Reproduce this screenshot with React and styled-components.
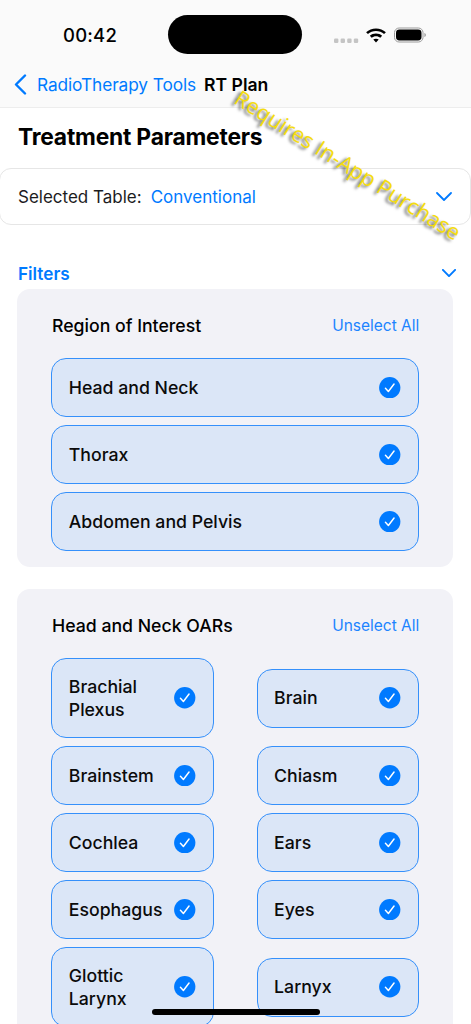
import React from "react";
import styled, { createGlobalStyle } from "styled-components";

const Global = createGlobalStyle`
  html, body { margin: 0; padding: 0; background: #fff; }
  body { font-family: Inter, "Liberation Sans", sans-serif; -webkit-font-smoothing: antialiased; }
`;

const Screen = styled.div`
  position: relative;
  width: 471px;
  height: 1024px;
  overflow: hidden;
  background: #fff;
  color: #000;
`;

const TopBar = styled.header`
  height: 107px;
  background: #fafafa;
  border-bottom: 1px solid #ededed;
`;

const StatusRow = styled.div`
  height: 69px;
  display: flex;
  align-items: center;
  padding-left: 63px;
  box-sizing: border-box;
`;

const Clock = styled.span`
  width: 105px;
  font-size: 18.5px;
  font-weight: 500;
  letter-spacing: 0.2px;
`;

const Island = styled.div`
  width: 134px;
  height: 39px;
  border-radius: 20px;
  background: #000;
`;

const StatusIcons = styled.div`
  display: flex;
  align-items: center;
  margin-left: 31px;
`;

const NavRow = styled.nav`
  display: flex;
  align-items: center;
  height: 30px;
  padding-left: 14px;
`;

const BackLabel = styled.span`
  margin-left: 10px;
  color: #007aff;
  font-size: 17.3px;
  letter-spacing: -0.1px;
`;

const NavTitle = styled.span`
  margin-left: 8px;
  font-size: 17.6px;
  font-weight: 600;
`;

const Title = styled.h1`
  margin: 14px 0 0 18px;
  font-size: 22.8px;
  line-height: 30px;
  font-weight: 700;
  letter-spacing: -0.2px;
`;

const TableCard = styled.div`
  box-sizing: border-box;
  display: flex;
  align-items: center;
  width: 472px;
  height: 57px;
  margin: 16px 0 0 -1px;
  padding: 0 18px 0 18px;
  background: #fff;
  border: 1px solid #e6e6e6;
  border-radius: 12px;
  font-size: 17px;
`;

const TableLabel = styled.span`
  color: #1c1c1e;
`;

const TableValue = styled.span`
  flex: 1;
  margin-left: 9px;
  color: #007aff;
`;

const FilterHead = styled.div`
  display: flex;
  align-items: center;
  justify-content: space-between;
  height: 24px;
  margin-top: 36px;
  padding: 0 15px 0 18px;
  color: #007aff;
  font-size: 17.2px;
  font-weight: 600;
`;

const Panel = styled.section`
  box-sizing: border-box;
  margin: ${(p) => p.$top}px 18px 0 17px;
  padding: 22px 33.7px 16px 34.3px;
  border-radius: 13px;
  background: #f2f2f7;
`;

const PanelHead = styled.div`
  display: flex;
  align-items: center;
  justify-content: space-between;
  height: 28px;
  margin-bottom: 19px;
  padding-left: 0.7px;
`;

const PanelTitle = styled.h2`
  margin: 0;
  font-size: 17.7px;
  font-weight: 500;
`;

const Unselect = styled.span`
  color: #1c84ff;
  font-size: 15.5px;
`;

const List = styled.div`
  display: flex;
  flex-direction: column;
  gap: 8px;
`;

const Grid = styled.div`
  display: grid;
  grid-template-columns: 1fr 1fr;
  column-gap: 42.6px;
  row-gap: 8px;
  align-items: center;
`;

const Option = styled.div`
  box-sizing: border-box;
  display: flex;
  align-items: center;
  justify-content: space-between;
  min-height: 59px;
  padding: 15.5px 17.5px 15.5px 16.5px;
  background: #dbe6f7;
  border: 1.5px solid #3590fb;
  border-radius: 15px;
  font-size: 17.7px;
  font-weight: 500;
  line-height: 23.5px;
`;

const OptionLabel = styled.span`
  color: #0b0b0b;
  max-width: 90px;
`;

const WideLabel = styled(OptionLabel)`
  max-width: none;
`;

const Watermark = styled.div`
  position: absolute;
  left: 201.5px;
  top: 152px;
  width: 292px;
  color: #f5dc0f;
  font-family: "Open Sans", sans-serif;
  font-size: 21.8px;
  line-height: 26px;
  text-align: center;
  white-space: nowrap;
  text-shadow: -2px 3px 3px rgba(0, 0, 0, 0.6);
  transform: rotate(32deg);
`;

const HomeBar = styled.div`
  position: absolute;
  left: 152px;
  top: 1009px;
  width: 168px;
  height: 6px;
  border-radius: 3px;
  background: #000;
`;

const Check = () => (
  <svg width="21.5" height="21.5" viewBox="0 0 22 22" aria-hidden="true">
    <circle cx="11" cy="11" r="10.9" fill="#007aff" />
    <path d="M6.6 11.6l3 3.2 5.8-7.6" fill="none" stroke="#fff" strokeWidth="1.5" strokeLinecap="round" strokeLinejoin="round" />
  </svg>
);

const Chevron = ({ width = 16, height = 9, strokeWidth = 1.8 }) => (
  <svg width={width} height={height} viewBox="0 0 16 9" aria-hidden="true">
    <path d="M1 1l7 7 7-7" fill="none" stroke="#007aff" strokeWidth={strokeWidth} strokeLinecap="round" strokeLinejoin="round" />
  </svg>
);

const Back = () => (
  <svg width="13" height="21" viewBox="0 0 13 21" aria-hidden="true">
    <path d="M11 1.5L2 10.5l9 9" fill="none" stroke="#007aff" strokeWidth="2.4" strokeLinecap="round" strokeLinejoin="round" />
  </svg>
);

const StatusGlyphs = () => (
  <svg width="96" height="20" viewBox="0 0 96 20" aria-hidden="true">
    <g fill="#c4c4c4">
      <rect x="1" y="13.5" width="4.4" height="4.4" rx="1.2" />
      <rect x="7.6" y="13.5" width="4.4" height="4.4" rx="1.2" />
      <rect x="14.2" y="13.5" width="4.4" height="4.4" rx="1.2" />
      <rect x="20.8" y="13.5" width="4.4" height="4.4" rx="1.2" />
    </g>
    <g transform="translate(33 3.5) scale(1.136 1.08) translate(-32.7 -3)">
      <path d="M41.5 3c3.4 0 6.4 1.3 8.7 3.4l-1.6 1.8c-1.9-1.7-4.4-2.8-7.1-2.8s-5.2 1.1-7.1 2.8l-1.6-1.8C35.1 4.3 38.1 3 41.5 3zm0 4.7c2.1 0 4 .8 5.4 2.1l-1.6 1.8c-1-.9-2.3-1.5-3.8-1.5s-2.8.6-3.8 1.5l-1.6-1.8c1.4-1.3 3.3-2.1 5.4-2.1zm0 4.7c1 0 1.8.4 2.4.9l-2.4 2.7-2.4-2.7c.6-.5 1.4-.9 2.4-.9z" fill="#000" />
    </g>
    <rect x="61.5" y="3" width="28.5" height="14" rx="4.6" fill="none" stroke="#9a9a9a" strokeWidth="1" />
    <rect x="63" y="4.5" width="25.5" height="11" rx="3.4" fill="#000" />
    <path d="M91.3 8c1 .3 1.7 1 1.7 2s-.7 1.7-1.7 2z" fill="#a8a8a8" />
  </svg>
);

const Row = ({ label, wide }) => {
  const Label = wide ? WideLabel : OptionLabel;
  return (
    <Option>
      <Label>{label}</Label>
      <Check />
    </Option>
  );
};

const regions = ["Head and Neck", "Thorax", "Abdomen and Pelvis"];
const oars = ["Brachial Plexus", "Brain", "Brainstem", "Chiasm", "Cochlea", "Ears", "Esophagus", "Eyes", "Glottic Larynx", "Larnyx"];

export default function App() {
  return (
    <Screen>
      <Global />
      <TopBar>
        <StatusRow>
          <Clock>00:42</Clock>
          <Island />
          <StatusIcons><StatusGlyphs /></StatusIcons>
        </StatusRow>
        <NavRow>
          <Back />
          <BackLabel>RadioTherapy Tools</BackLabel>
          <NavTitle>RT Plan</NavTitle>
        </NavRow>
      </TopBar>
      <Title>Treatment Parameters</Title>
      <TableCard>
        <TableLabel>Selected Table:</TableLabel>
        <TableValue>Conventional</TableValue>
        <Chevron />
      </TableCard>
      <FilterHead>
        <span>Filters</span>
        <Chevron width={14} height={8} strokeWidth={2.2} />
      </FilterHead>
      <Panel $top={4}>
        <PanelHead>
          <PanelTitle>Region of Interest</PanelTitle>
          <Unselect>Unselect All</Unselect>
        </PanelHead>
        <List>
          {regions.map((r) => <Row key={r} label={r} wide />)}
        </List>
      </Panel>
      <Panel $top={22}>
        <PanelHead>
          <PanelTitle>Head and Neck OARs</PanelTitle>
          <Unselect>Unselect All</Unselect>
        </PanelHead>
        <Grid>
          {oars.map((o) => <Row key={o} label={o} />)}
        </Grid>
      </Panel>
      <Watermark>Requires In-App Purchase</Watermark>
      <HomeBar />
    </Screen>
  );
}
